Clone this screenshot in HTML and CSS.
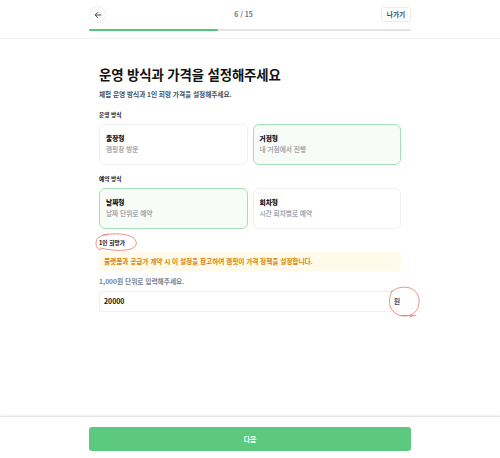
FILE: index.html
```html
<!DOCTYPE html>
<html lang="ko">
<head>
<meta charset="utf-8">
<title>운영 방식과 가격 설정</title>
<link rel="stylesheet" href="styles.css">
</head>
<body>
<header class="header">
  <div class="nav">
    <button class="back" aria-label="뒤로"><svg viewBox="0 0 24 24"><path d="M21 12H4M11 4.5L3.5 12l7.500 7.500"/></svg></button>
    <span class="step">6 / 15</span>
    <button class="exit">나가기</button>
  </div>
  <div class="progress"><div class="progress-value"></div></div>
</header>
<main class="content">
  <h1 class="title">운영 방식과 가격을 설정해주세요</h1>
  <p class="subtitle">체험 운영 방식과 1인 희망 가격을 설정해주세요.</p>
  <section class="group">
    <h2 class="label">운영 방식</h2>
    <div class="options">
      <div class="card"><strong class="card-title">출장형</strong><span class="card-text">캠핑장 방문</span></div>
      <div class="card selected"><strong class="card-title">거점형</strong><span class="card-text">내 거점에서 진행</span></div>
    </div>
  </section>
  <section class="group">
    <h2 class="label">예약 방식</h2>
    <div class="options">
      <div class="card selected"><strong class="card-title">날짜형</strong><span class="card-text">날짜 단위로 예약</span></div>
      <div class="card"><strong class="card-title">회차형</strong><span class="card-text">시간 회차별로 예약</span></div>
    </div>
  </section>
  <section class="group">
    <h2 class="label price-label">1인 희망가
      <svg class="mark mark-label" viewBox="0 0 44 20"><path d="M13 1.600C5 2 1 5 1 10c0 4 1.500 6 4.500 7M8 2C17 0 31 .500 37 4c6 4 6 9-1 12-7 2-18 2-31-1"/></svg>
    </h2>
    <div class="notice">플랫폼과 공급가 계약 시 이 설정을 참고하여 캠핏이 가격 정책을 설정합니다.</div>
    <p class="hint">1,000원 단위로 입력해주세요.</p>
    <div class="field"><span>20000</span><span class="unit">원
      <svg class="mark mark-unit" viewBox="0 0 34 32"><path d="M4 5.500C1 11 .500 18 3.500 23c3 5 8 7 13 7 8 0 14-5 14.500-13C32 9 27 3 20 1.500 14 .500 7 2 3 6M13 29.500l15 .200M22 31.200l3.500-2"/></svg>
    </span></div>
  </section>
</main>
<footer class="footer"><button class="next">다음</button></footer>
</body>
</html>
```

FILE: styles.css
```css
* { box-sizing: border-box; }
body {
  margin: 0;
  height: 458px;
  display: flex;
  flex-direction: column;
  overflow: hidden;
  background: #fff;
  color: #111;
  font-family: "Noto Sans CJK KR", sans-serif;
  font-weight: 700;
}
h1, h2, p { margin: 0; }
button { padding: 0; font: inherit; }
.header {
  height: 39px;
  padding: 5px 89px 0;
  border-bottom: 1px solid #f0f0f2;
}
.nav {
  height: 19px;
  display: flex;
  align-items: center;
  justify-content: space-between;
}
.back {
  width: 17px;
  height: 17px;
  display: grid;
  place-items: center;
  border: 1px solid #eeeff1;
  border-radius: 50%;
  background: #fff;
}
.back svg {
  width: 8px;
  height: 8px;
  fill: none;
  stroke: #333b47;
  stroke-width: 2.8;
  stroke-linecap: round;
  stroke-linejoin: round;
}
.step { margin-top: -2px; font-size: 6.8px; color: #6b7380; }
.exit {
  width: 30px;
  height: 15px;
  margin-top: -1px;
  border: 1px solid #e9ebee;
  border-radius: 3px;
  background: #fff;
  color: #414956;
  font-size: 6.7px;
  line-height: 13px;
}
.progress {
  height: 2px;
  margin-top: 5px;
  border-radius: 1px;
  background: #e2e4e8;
}
.progress-value { width: 40%; height: 2px; border-radius: 1px; background: #51ca77; }
.content { width: 302px; margin-left: 99px; padding-top: 25px; }
.title { font-size: 13.4px; line-height: 20px; letter-spacing: -.12px; white-space: nowrap; }
.subtitle {
  margin-top: 5px;
  color: #48505f;
  font-size: 6.7px;
  line-height: 10px;
  letter-spacing: -.06px;
}
.group { margin-top: 11px; }
.group + .group { margin-top: 9px; }
.label { height: 10px; font-size: 5.7px; line-height: 10px; }
.options {
  display: grid;
  grid-template-columns: 1fr 1fr;
  gap: 5px;
  margin-top: 4px;
}
.card {
  height: 41px;
  padding: 8px 6px;
  display: flex;
  flex-direction: column;
  gap: 1px;
  border: 1px solid #eff0f1;
  border-radius: 6px;
  font-size: 6.7px;
  line-height: 10px;
}
.card.selected { border-color: #a5dfb8; background: #f8fcf9; }
.card-text { color: #a4a8af; letter-spacing: -.04px; }
.price-label { position: relative; }
.mark {
  position: absolute;
  fill: none;
  stroke: #ee7468;
  stroke-width: .8;
  stroke-linecap: round;
}
.mark-label { left: -4px; top: -5px; width: 44px; height: 20px; }
.notice {
  height: 19px;
  margin-top: 4px;
  padding-left: 5px;
  border-radius: 3px;
  background: #fffaea;
  color: #d9820f;
  font-size: 6.7px;
  line-height: 18px;
  letter-spacing: -.07px;
}
.hint { margin-top: 5px; color: #7b828f; font-size: 6.7px; line-height: 11px; }
.field {
  height: 21px;
  margin-top: 4px;
  padding: 0 0 0 4px;
  display: flex;
  align-items: center;
  justify-content: space-between;
  border: 1px solid #f0f1f3;
  border-right-color: transparent;
  border-radius: 3px;
  font-size: 6.9px;
  line-height: 10px;
}
.field > span { margin-top: -1px; }
.unit { position: relative; color: #48505f; }
.mark-unit { left: -6px; top: -10px; width: 34px; height: 32px; }
.footer {
  height: 42px;
  margin-top: auto;
  padding: 10px 89px 0;
  border-top: 1px solid #e5e5e5;
  box-shadow: 0 -1px 2px #00000010;
}
.next {
  display: block;
  width: 322px;
  height: 24px;
  border: 0;
  border-radius: 3px;
  background: #5cc97e;
  color: #fff;
  font-size: 6.9px;
}
```
